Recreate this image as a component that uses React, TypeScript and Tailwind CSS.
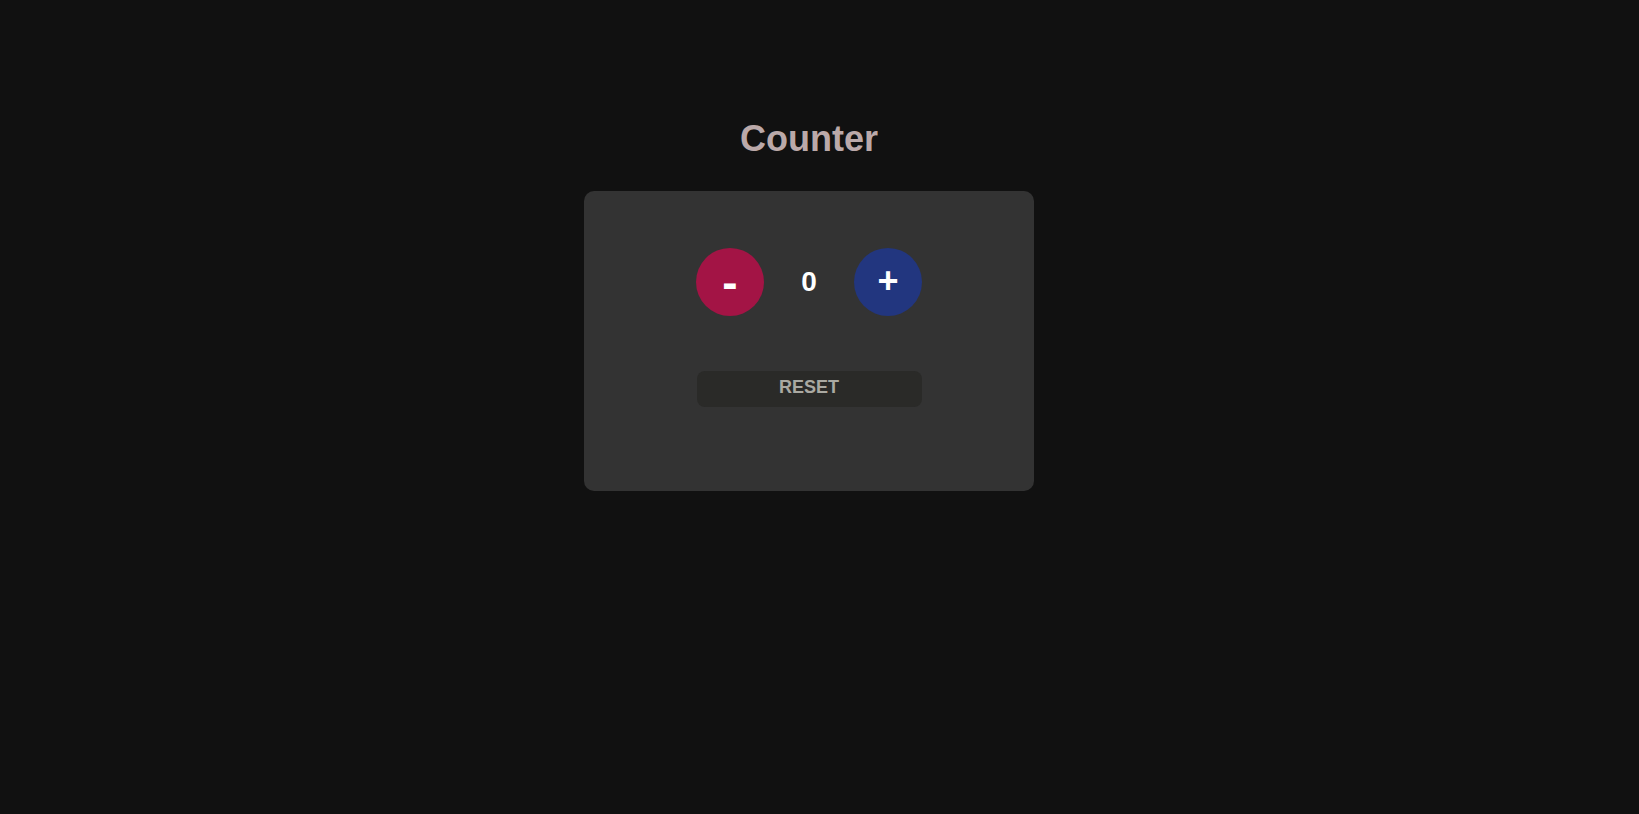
export default function App() {
	return (
		<div className="min-h-screen w-full bg-[#111111] font-['Liberation_Sans',Arial,sans-serif]">
			<div className="flex flex-col items-center pt-[121px] pr-[21px]">
				{/* Title */}
				<h1 className="text-[36px] font-bold leading-none text-[#bba9a9]">Counter</h1>

				{/* Card */}
				<div className="mt-[34px] flex h-[300px] w-[450px] flex-col items-center rounded-[10px] bg-[#333333] pt-[57px]">
					<div className="flex items-center">
						<button className="flex h-[68px] w-[68px] items-center justify-center rounded-full bg-[#a31445] text-[46px] font-bold leading-none text-white">
							-
						</button>
						<span className="w-[90px] text-center text-[28px] font-bold leading-none text-white">0</span>
						<button className="flex h-[68px] w-[68px] items-center justify-center rounded-full bg-[#22367f] pb-[2px] text-[36px] font-bold leading-none text-white">
							+
						</button>
					</div>

					<button className="mt-[55px] h-[36px] w-[225px] rounded-[8px] bg-[#2a2a28] pb-[3px] text-[18px] font-bold text-[#aaa9a2]">
						RESET
					</button>
				</div>
			</div>
		</div>
	)
}
